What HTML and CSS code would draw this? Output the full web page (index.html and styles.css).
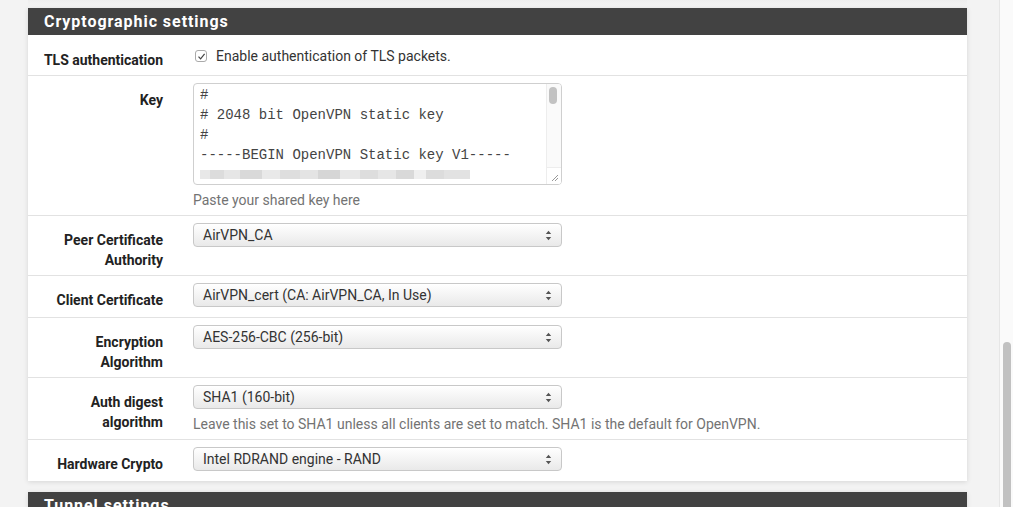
FILE: index.html
```html
<!DOCTYPE html>
<html>
<head>
<meta charset="utf-8">
<link rel="stylesheet" href="styles.css">
</head>
<body>
<div class="page">
  <div class="prev-shadow"></div>
  <section class="panel">
    <h2 class="panel-title">Cryptographic settings</h2>
    <div class="panel-body">
      <div class="row">
        <label class="label">TLS authentication</label>
        <div class="control">
          <label class="check">
            <span class="checkbox"><svg width="9" height="9" viewBox="0 0 9 9"><path d="M1.5 4.6 L3.6 6.8 L7.6 1.8" fill="none" stroke="#444" stroke-width="1.2"/></svg></span>
            Enable authentication of TLS packets.
          </label>
        </div>
      </div>
      <div class="row">
        <label class="label">Key</label>
        <div class="control">
          <div class="textarea">
            <div class="ta-text">
              <div class="ta-line">#</div>
              <div class="ta-line"># 2048 bit OpenVPN static key</div>
              <div class="ta-line">#</div>
              <div class="ta-line">-----BEGIN OpenVPN Static key V1-----</div>
              <div class="blur"></div>
            </div>
            <div class="ta-scroll">
              <div class="ta-track"><div class="ta-thumb"></div></div>
              <div class="ta-corner"><svg width="8" height="8" viewBox="0 0 8 8"><path d="M7 1 L1 7 M7 4 L4 7" stroke="#999" stroke-width="1"/></svg></div>
            </div>
          </div>
          <p class="help">Paste your shared key here</p>
        </div>
      </div>
      <div class="row">
        <label class="label">Peer Certificate Authority</label>
        <div class="control">
          <div class="select"><span>AirVPN_CA</span><svg class="arrows" width="7" height="11" viewBox="0 0 7 11"><path d="M3.5 0.8 L6.2 4 L0.8 4 Z M3.5 10.2 L6.2 7 L0.8 7 Z" fill="#555"/></svg></div>
        </div>
      </div>
      <div class="row">
        <label class="label">Client Certificate</label>
        <div class="control">
          <div class="select"><span>AirVPN_cert (CA: AirVPN_CA, In Use)</span><svg class="arrows" width="7" height="11" viewBox="0 0 7 11"><path d="M3.5 0.8 L6.2 4 L0.8 4 Z M3.5 10.2 L6.2 7 L0.8 7 Z" fill="#555"/></svg></div>
        </div>
      </div>
      <div class="row">
        <label class="label">Encryption Algorithm</label>
        <div class="control">
          <div class="select"><span>AES-256-CBC (256-bit)</span><svg class="arrows" width="7" height="11" viewBox="0 0 7 11"><path d="M3.5 0.8 L6.2 4 L0.8 4 Z M3.5 10.2 L6.2 7 L0.8 7 Z" fill="#555"/></svg></div>
        </div>
      </div>
      <div class="row">
        <label class="label">Auth digest algorithm</label>
        <div class="control">
          <div class="select"><span>SHA1 (160-bit)</span><svg class="arrows" width="7" height="11" viewBox="0 0 7 11"><path d="M3.5 0.8 L6.2 4 L0.8 4 Z M3.5 10.2 L6.2 7 L0.8 7 Z" fill="#555"/></svg></div>
          <p class="help">Leave this set to SHA1 unless all clients are set to match. SHA1 is the default for OpenVPN.</p>
        </div>
      </div>
      <div class="row">
        <label class="label">Hardware Crypto</label>
        <div class="control">
          <div class="select"><span>Intel RDRAND engine - RAND</span><svg class="arrows" width="7" height="11" viewBox="0 0 7 11"><path d="M3.5 0.8 L6.2 4 L0.8 4 Z M3.5 10.2 L6.2 7 L0.8 7 Z" fill="#555"/></svg></div>
        </div>
      </div>
    </div>
  </section>
  <section class="panel">
    <h2 class="panel-title">Tunnel settings</h2>
  </section>
</div>
<div class="scrollbar"><div class="thumb"></div></div>
</body>
</html>
```

FILE: styles.css
```css
html, body {
  margin: 0;
  height: 507px;
  overflow: hidden;
}
body {
  display: flex;
  background: #f3f3f3;
  font-family: Roboto, "Liberation Sans", sans-serif;
  font-size: 14px;
  color: #333;
}
.page {
  flex: 1;
  padding: 0 32px 0 28px;
  display: flex;
  flex-direction: column;
}
.prev-shadow {
  height: 8px;
  flex-shrink: 0;
  background: linear-gradient(#ededed, #f3f3f3 6px);
}
.panel {
  background: #fff;
  box-shadow: 0 1px 5px rgba(0,0,0,0.12);
  margin-bottom: 11px;
  flex-shrink: 0;
}
.panel-title {
  margin: 0;
  height: 27px;
  line-height: 27px;
  background: #424242;
  color: #fff;
  font-size: 16px;
  font-weight: bold;
  letter-spacing: 0.95px;
  padding-left: 16px;
}
.row {
  display: flex;
  align-items: flex-start;
  padding: 7px 0 5px;
  border-top: 1px solid #e2e2e2;
}
.row:first-child {
  border-top: 1px solid #fff;
}
.label {
  width: 120px;
  padding: 7px 15px 0 15px;
  text-align: right;
  font-weight: bold;
  line-height: 20px;
  color: #222;
  flex-shrink: 0;
}
.control {
  padding-left: 15px;
  flex: 1;
}
.check {
  display: flex;
  align-items: center;
  padding-top: 3px;
  line-height: 20px;
  color: #333;
}
.checkbox {
  width: 10px;
  height: 10px;
  border: 1px solid #aaa;
  border-radius: 3px;
  margin: 0 9px 0 2px;
  display: flex;
  align-items: center;
  justify-content: center;
  background: #fff;
}
.textarea {
  width: 367px;
  height: 100px;
  border: 1px solid #cfcfcf;
  border-radius: 4px;
  display: flex;
  overflow: hidden;
  margin-bottom: 5px;
}
.ta-text {
  flex: 1;
  padding: 1px 0 0 6px;
  font-family: "Liberation Mono", monospace;
  font-size: 14px;
  line-height: 20px;
  color: #444;
}
.ta-line {
  white-space: nowrap;
}
.blur {
  margin-top: 5px;
  width: 270px;
  height: 9px;
  background: linear-gradient(90deg,
    #e8e8e8 0 10px, #dcdcdc 10px 24px, #e6e6e6 24px 40px, #d9d9d9 40px 62px,
    #e9e9e9 62px 80px, #dedede 80px 100px, #e4e4e4 100px 118px, #d6d6d6 118px 140px,
    #e8e8e8 140px 160px, #dddddd 160px 178px, #e6e6e6 178px 196px, #d9d9d9 196px 214px,
    #efefef 214px 226px, #dcdcdc 226px 244px, #e2e2e2 244px 270px);
}
.ta-scroll {
  width: 14px;
  display: flex;
  flex-direction: column;
  border-left: 1px solid #ededed;
  background: #fafafa;
}
.ta-track {
  flex: 1;
  padding: 3px 0 0 2px;
}
.ta-thumb {
  width: 8px;
  height: 17px;
  border-radius: 4px;
  background: #c2c2c2;
}
.ta-corner {
  height: 14px;
  border-top: 1px solid #ededed;
  display: flex;
  align-items: flex-end;
  justify-content: flex-end;
  padding: 0 2px 2px 0;
  background: #fff;
}
.help {
  margin: 0;
  line-height: 20px;
  color: #737373;
}
.select {
  height: 22px;
  border: 1px solid #c8c8c8;
  border-radius: 4px;
  background: linear-gradient(#ffffff, #e9e9e9);
  box-shadow: inset 0 1px 0 #fff;
  display: flex;
  align-items: center;
  justify-content: space-between;
  padding: 0 9px 0 9px;
  width: 349px;
  margin-bottom: 5px;
  color: #333;
}
.scrollbar {
  border-left: 1px solid #e6e6e6;
  background: #fafafa;
  display: flex;
  flex-direction: column;
  justify-content: flex-end;
  padding: 0 2px 0 3px;
  width: 8px;
}
.thumb {
  height: 165px;
  border-radius: 4px 4px 0 0;
  background: #c1c1c1;
}
```
